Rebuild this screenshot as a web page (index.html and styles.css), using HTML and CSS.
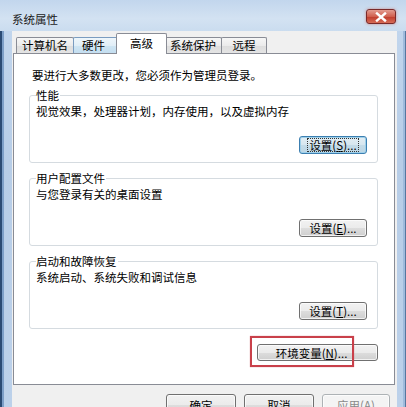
FILE: index.html
```html
<!DOCTYPE html>
<html lang="zh-CN">
<head>
<meta charset="utf-8">
<title>系统属性</title>
<link rel="stylesheet" href="styles.css">
</head>
<body>
<div class="window">
  <div class="titlebar">
    <span class="title">系统属性</span>
    <span class="close">
      <svg width="12" height="10" viewBox="0 0 12 10"><path d="M2 1.5 L10 8.5 M10 1.5 L2 8.5" stroke="#fff" stroke-width="2.4" stroke-linecap="square"/></svg>
    </span>
  </div>
  <div class="client">
    <div class="tabs">
      <div class="tab tab-first">计算机名</div>
      <div class="tab tab-hover">硬件</div>
      <div class="tab tab-sel">高级</div>
      <div class="tab">系统保护</div>
      <div class="tab">远程</div>
    </div>
    <div class="panel">
      <p class="intro">要进行大多数更改，您必须作为管理员登录。</p>
      <div class="group">
        <div class="legend">性能</div>
        <div class="desc">视觉效果，处理器计划，内存使用，以及虚拟内存</div>
        <div class="btn-row"><span class="btn btn-focus"><span class="focus-ring">设置(<u>S</u>)...</span></span></div>
      </div>
      <div class="group">
        <div class="legend">用户配置文件</div>
        <div class="desc">与您登录有关的桌面设置</div>
        <div class="btn-row"><span class="btn">设置(<u>E</u>)...</span></div>
      </div>
      <div class="group">
        <div class="legend">启动和故障恢复</div>
        <div class="desc">系统启动、系统失败和调试信息</div>
        <div class="btn-row"><span class="btn">设置(<u>T</u>)...</span></div>
      </div>
      <div class="env-row">
        <div class="env-wrap">
          <span class="btn btn-env">环境变量(<u>N</u>)...</span>
          <span class="highlight"></span>
        </div>
      </div>
    </div>
    <div class="footer">
      <span class="btn btn-foot">确定</span>
      <span class="btn btn-foot">取消</span>
      <span class="btn btn-foot btn-disabled">应用(<u>A</u>)</span>
    </div>
  </div>
</div>
</body>
</html>
```
FILE: styles.css
```css
* { box-sizing: border-box; }
html, body { margin: 0; padding: 0; background: #fff; }
body { font-family: "Noto Sans CJK SC", "Noto Sans", sans-serif; font-size: 11.5px; color: #000; }

.window {
  width: 406px;
  height: 407px;
  overflow: hidden;
  display: flex;
  flex-direction: column;
  background: linear-gradient(#c3d7ee, #b7cde7 40%, #bcd1ea);
  box-shadow: inset 2px 0 #2b4b74, inset 4px 0 #7d9fc8, inset -1px 0 #56779f, inset -3px 0 #9fbbdc, inset 0 1px #5f7fa8;
}

.titlebar {
  height: 31px;
  flex: none;
  display: flex;
  align-items: flex-start;
  padding-left: 12px;
  background: linear-gradient(#c2d6ed, #d3e2f2 60%, #cadcef);
}
.title { margin-top: 12px; line-height: 14px; font-size: 11.5px; color: #1a1a1a; }
.close {
  margin-left: auto;
  margin-right: 10px;
  margin-top: 9px;
  width: 30px;
  height: 15px;
  border: 1px solid #7a2a2a;
  border-radius: 3px;
  background: linear-gradient(#e39c90, #d0604f 50%, #bf3b2b 51%, #d66d58);
  box-shadow: 0 0 3px rgba(200,60,40,0.5);
  display: flex;
  align-items: center;
  justify-content: center;
}

.client {
  flex: 1;
  margin: 0 9px 0 12px;
  background: #f0f0f0;
  padding: 2px 2px 0 1px;
  display: flex;
  flex-direction: column;
}

.tabs {
  display: flex;
  align-items: flex-end;
  height: 20px;
  padding-left: 3px;
}
.tab {
  height: 16px;
  line-height: 15px;
  min-width: 46px;
  padding: 0 5px;
  text-align: center;
  border: 1px solid #898c95;
  border-bottom: none;
  border-radius: 2px 2px 0 0;
  margin-left: -1px;
  background: linear-gradient(#f6f6f6, #ebebeb 50%, #dddddd 51%, #e4e4e4);
  font-size: 11.5px;
}
.tab-first { margin-left: 0; }
.tab-hover { background: linear-gradient(#eef6fb, #e1eef7 50%, #cfe5f3 51%, #c4def0); border-color: #7a9cc0; padding: 0 12px 0 7px; }
.tab-sel {
  height: 21px;
  line-height: 18px;
  margin: 0 -2px -1px -3px;
  padding: 0 13px;
  background: #fff;
  position: relative;
  z-index: 1;
}

.panel {
  height: 332px;
  flex: none;
  border: 1px solid #898c95;
  background: #fff;
  padding: 13px 16px 0 15px;
}
.intro { margin: 0 0 12px 3px; line-height: 16px; }

.group {
  border: 1px solid #d5dbe0;
  border-radius: 3px;
  padding: 0 10px 8px 6px;
  margin-bottom: 15px;
}
.legend {
  display: block;
  width: fit-content;
  margin-top: -8px;
  height: 14px;
  line-height: 14px;
  background: #fff;
  padding-right: 1px;
}
.desc { margin-top: 1px; line-height: 16px; height: 16px; }
.btn-row { display: flex; justify-content: flex-end; margin-top: 17px; }

.btn {
  display: inline-flex;
  align-items: center;
  justify-content: center;
  height: 18px;
  width: 68px;
  border: 1px solid #707070;
  border-radius: 3px;
  background: linear-gradient(#f2f2f2, #ebebeb 50%, #dddddd 51%, #cfcfcf);
  box-shadow: inset 0 0 0 1px rgba(255,255,255,0.7);
  font-size: 11.5px;
  line-height: 14px;
  white-space: nowrap;
}
.btn u { text-decoration: underline; text-underline-offset: 1px; }
.btn-focus {
  border-color: #3c7fb1;
  background: linear-gradient(#e3eef4, #d6e6ef 50%, #c4dbe8 51%, #bcd6e4);
  box-shadow: inset 0 0 0 1px #9fd0ea;
}
.focus-ring { outline: 1px dotted #333; outline-offset: 0; padding: 0 1px; line-height: 12px; }

.env-row { display: flex; justify-content: flex-end; margin-top: 1px; }
.env-wrap { position: relative; }
.btn-env { width: 121px; height: 17px; padding-right: 12px; }
.highlight {
  position: absolute;
  left: -7px;
  top: -8px;
  width: 104px;
  height: 31px;
  border: 2px solid #c9404a;
  box-shadow: 0 0 1px rgba(201,64,74,0.6);
}

.footer {
  display: flex;
  justify-content: flex-end;
  gap: 8px;
  padding: 9px 5px 0 0;
}
.btn-foot { width: 70px; height: 22px; }
.btn-disabled {
  color: #8a8a8a;
  border-color: #adb2b5;
  background: #f4f4f4;
  width: 68px;
}
.btn-disabled u { text-decoration-color: #8a8a8a; }
```
